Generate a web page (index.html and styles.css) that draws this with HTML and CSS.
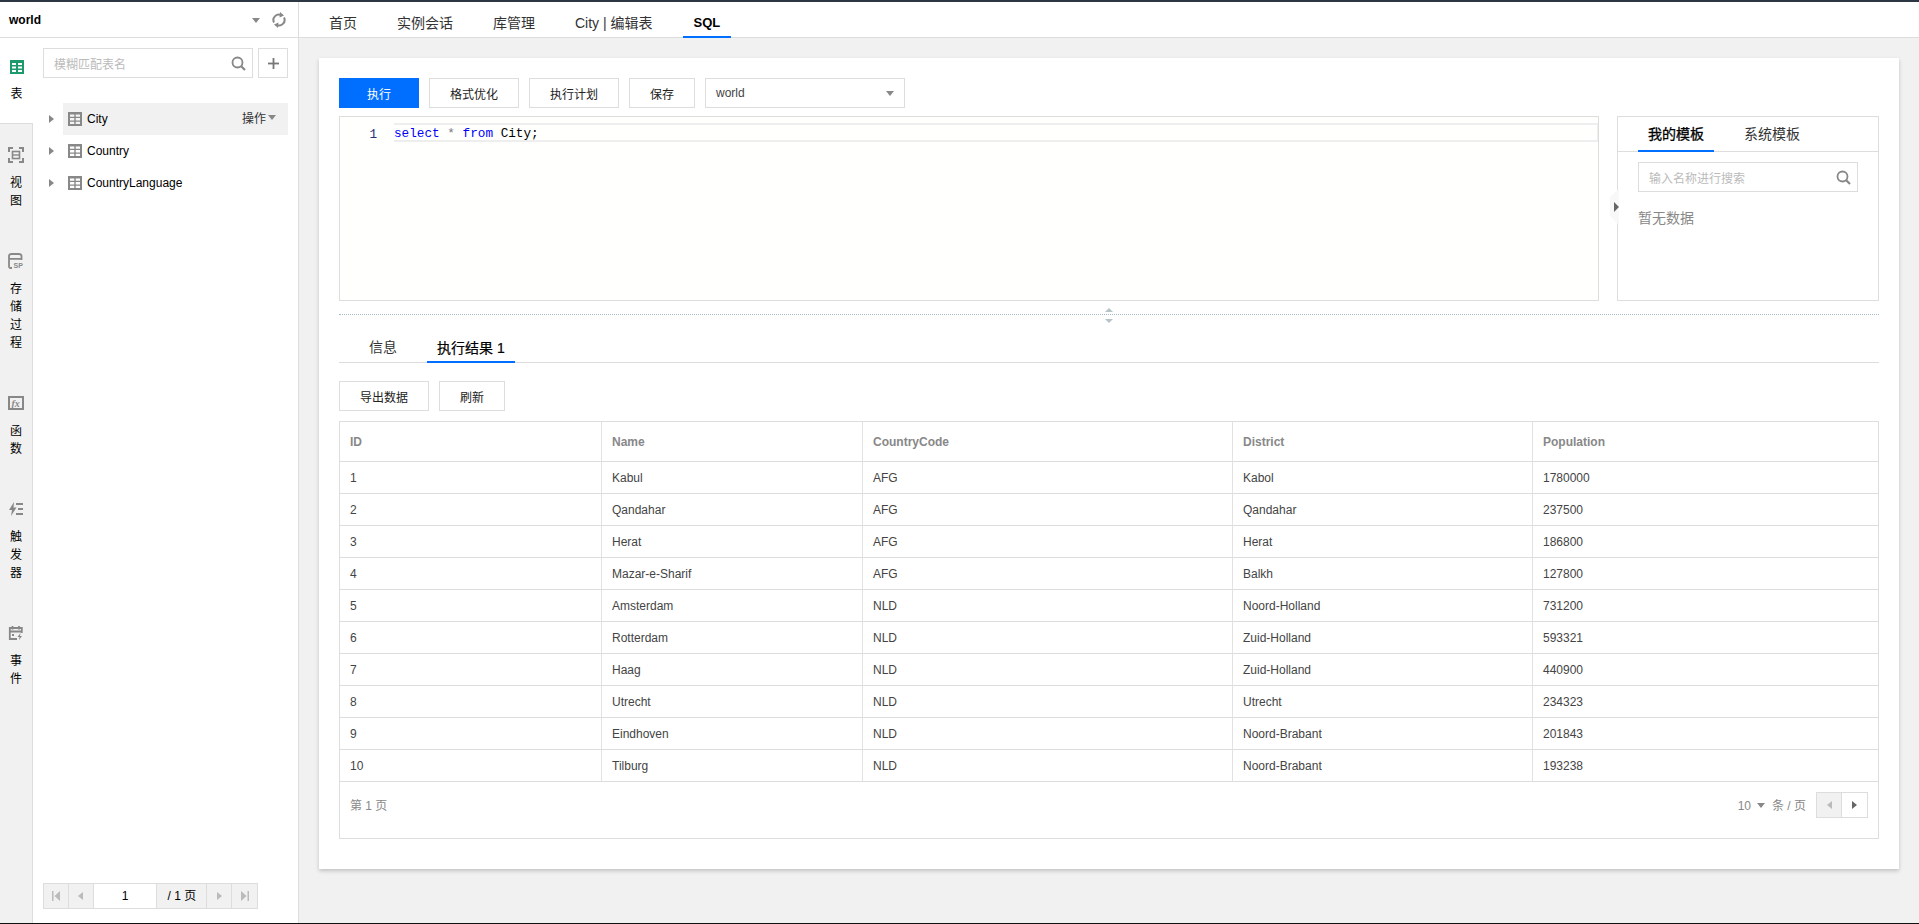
FILE: index.html
```html
<!DOCTYPE html>
<html lang="en">
<head>
    <meta charset="UTF-8">
    <meta name="viewport" content="width=device-width, initial-scale=1.0">
    <title>SQL</title>
    <link rel="stylesheet" href="styles.css">
</head>
<body>
<div class="app">
    <!-- left side: database name, object rail, table list -->
    <aside class="sidebar">
        <div class="db-head">
            <span class="db-name">world</span>
            <i class="tri tri-down db-caret"></i>
            <svg class="db-refresh" width="14" height="16" viewBox="0 0 14 16" fill="none" stroke="#888" stroke-width="2">
                <path d="M2 10.5A5.5 5.5 0 0 1 9.5 3.2"/>
                <path d="M12 5.5A5.5 5.5 0 0 1 4.5 12.8"/>
                <path d="M8 0l4 3.4-4.4 2z" fill="#888" stroke="none"/>
                <path d="M6 16l-4-3.4 4.4-2z" fill="#888" stroke="none"/>
            </svg>
        </div>
        <div class="side-body">
            <nav class="rail">
                <div class="rail-item active">
                    <svg width="14" height="14" viewBox="0 0 14 14"><rect width="14" height="14" fill="#1d9a6c"/><path d="M2 3h4v2H2zM8 3h4v2H8zM2 6.500h4v2H2zM8 6.500h4v2H8zM2 10h4v2H2zM8 10h4v2H8z" fill="#fff"/></svg>
                    <span class="rail-label">表</span>
                </div>
                <div class="rail-item">
                    <svg width="16" height="16" viewBox="0 0 16 16" fill="none" stroke="#888" stroke-width="2"><path d="M1 5V1h4M11 1h4v4M15 11v4h-4M5 15H1v-4"/><rect x="4.500" y="4.500" width="7" height="7" stroke-width="1.600"/><path d="M5 8h6" stroke-width="1.400"/></svg>
                    <span class="rail-label">视图</span>
                </div>
                <div class="rail-item">
                    <svg class="sp-icon" width="16" height="16" viewBox="0 0 16 16" fill="none" stroke="#888" stroke-width="1.800"><path d="M4 15H2.500Q1 15 1 13V3Q1 1 3.500 1h7Q13.500 1 13.500 3V7M1 5.800h12.500"/><text x="5.500" y="15" class="icon-text">SP</text></svg>
                    <span class="rail-label">存储过程</span>
                </div>
                <div class="rail-item">
                    <svg width="16" height="16" viewBox="0 0 16 16"><rect x="1" y="2" width="14" height="12" fill="none" stroke="#888" stroke-width="2"/><text x="3.500" y="11.500" class="icon-fx">fx</text></svg>
                    <span class="rail-label">函数</span>
                </div>
                <div class="rail-item">
                    <svg width="16" height="16" viewBox="0 0 16 16" fill="#888"><path d="M6 1L1 9h3l-1 6 5.500-8.500H5.500z"/><path d="M8 2h7v2H8zM10 7h5v2h-5zM8 12h7v2H8z"/></svg>
                    <span class="rail-label">触发器</span>
                </div>
                <div class="rail-item">
                    <svg width="16" height="16" viewBox="0 0 16 16" fill="none" stroke="#888" stroke-width="1.800"><path d="M9 14H1.800V3h12v5M1.800 6.500h12M4.500 1v3.500M11 1v3.500M4 10h2"/><path d="M12.500 8l-3 4h2l-.5 3 3-4h-2z" fill="#888" stroke="none"/></svg>
                    <span class="rail-label">事件</span>
                </div>
            </nav>
            <div class="table-pane">
                <div class="pane-search">
                    <div class="search-box">
                        <span class="placeholder">模糊匹配表名</span>
                        <svg class="search-icon" width="15" height="15" viewBox="0 0 15 15" fill="none" stroke="#888" stroke-width="1.800"><circle cx="6.500" cy="6.500" r="5"/><path d="M10.200 10.200L14 14" stroke-width="2.200"/></svg>
                    </div>
                    <div class="add-btn">
                        <svg width="11" height="11" viewBox="0 0 11 11" fill="#777"><path d="M4.600 0h1.800v11H4.600z"/><path d="M0 4.600h11v1.800H0z"/></svg>
                    </div>
                </div>
                <ul class="tree">
                    <li class="tree-row">
                        <i class="tri tri-right"></i>
                        <div class="tree-item current">
                            <svg class="tbl-icon" width="14" height="14" viewBox="0 0 14 14"><path d="M0 0h14v14H0z" fill="#888"/><path d="M2 2.500h4.300v2.300H2zM7.700 2.500H12v2.300H7.700zM2 6.100h4.300v2.300H2zM7.700 6.100H12v2.300H7.700zM2 9.700h4.300V12H2zM7.700 9.700H12V12H7.700z" fill="#f3f3f3"/></svg>
                            <span>City</span>
                            <span class="tree-op">操作<i class="tri tri-down"></i></span>
                        </div>
                    </li>
                    <li class="tree-row">
                        <i class="tri tri-right"></i>
                        <div class="tree-item">
                            <svg class="tbl-icon" width="14" height="14" viewBox="0 0 14 14"><path d="M0 0h14v14H0z" fill="#888"/><path d="M2 2.500h4.300v2.300H2zM7.700 2.500H12v2.300H7.700zM2 6.100h4.300v2.300H2zM7.700 6.100H12v2.300H7.700zM2 9.700h4.300V12H2zM7.700 9.700H12V12H7.700z" fill="#fff"/></svg>
                            <span>Country</span>
                        </div>
                    </li>
                    <li class="tree-row">
                        <i class="tri tri-right"></i>
                        <div class="tree-item">
                            <svg class="tbl-icon" width="14" height="14" viewBox="0 0 14 14"><path d="M0 0h14v14H0z" fill="#888"/><path d="M2 2.500h4.300v2.300H2zM7.700 2.500H12v2.300H7.700zM2 6.100h4.300v2.300H2zM7.700 6.100H12v2.300H7.700zM2 9.700h4.300V12H2zM7.700 9.700H12V12H7.700z" fill="#fff"/></svg>
                            <span>CountryLanguage</span>
                        </div>
                    </li>
                </ul>
                <div class="side-pager">
                    <span class="pg-btn"><svg width="8" height="10" viewBox="0 0 8 10" fill="#bbb"><path d="M0 0h1.500v10H0zM8 0v10L2.500 5z"/></svg></span>
                    <span class="pg-btn"><i class="tri tri-left off"></i></span>
                    <span class="pg-input">1</span>
                    <span class="pg-total">/ 1 页</span>
                    <span class="pg-btn"><i class="tri tri-right off"></i></span>
                    <span class="pg-btn"><svg width="8" height="10" viewBox="0 0 8 10" fill="#bbb"><path d="M6.500 0H8v10H6.500zM0 0v10l5.500-5z"/></svg></span>
                </div>
            </div>
        </div>
    </aside>

    <main class="main">
        <div class="top-tabs">
            <a class="top-tab">首页</a>
            <a class="top-tab">实例会话</a>
            <a class="top-tab">库管理</a>
            <a class="top-tab">City | 编辑表</a>
            <a class="top-tab on">SQL</a>
        </div>
        <div class="content">
            <div class="card">
                <div class="toolbar">
                    <button class="btn primary w-run">执行</button>
                    <button class="btn w-fmt">格式优化</button>
                    <button class="btn w-plan">执行计划</button>
                    <button class="btn w-save">保存</button>
                    <div class="db-select">world<i class="tri tri-down"></i></div>
                </div>
                <div class="editor-row">
                    <div class="editor">
                        <div class="gutter">1</div>
                        <div class="code-line"><span class="kw">select</span> <span class="star">*</span> <span class="kw">from</span> City;</div>
                    </div>
                    <div class="templates">
                        <div class="notch"><i class="tri tri-right dark"></i></div>
                        <div class="tpl-tabs">
                            <span class="tpl-tab on">我的模板</span>
                            <span class="tpl-tab">系统模板</span>
                        </div>
                        <div class="search-box tpl-search">
                            <span class="placeholder">输入名称进行搜索</span>
                            <svg class="search-icon" width="15" height="15" viewBox="0 0 15 15" fill="none" stroke="#888" stroke-width="1.800"><circle cx="6.500" cy="6.500" r="5"/><path d="M10.200 10.200L14 14" stroke-width="2.200"/></svg>
                        </div>
                        <div class="tpl-empty">暂无数据</div>
                    </div>
                </div>
                <div class="splitter">
                    <svg class="split-handle" width="8" height="15" viewBox="0 0 8 15" fill="#b4c4c8"><path d="M4 0l4 4H0zM0 11h8l-4 4z"/></svg>
                </div>
                <div class="result-tabs">
                    <span class="result-tab">信息</span>
                    <span class="result-tab on">执行结果 1</span>
                </div>
                <div class="result-actions">
                    <button class="btn w-export">导出数据</button>
                    <button class="btn w-refresh">刷新</button>
                </div>
                <div class="result">
                    <table class="grid">
                        <colgroup><col class="c1"><col class="c2"><col class="c3"><col class="c4"><col></colgroup>
                        <thead>
                            <tr><th>ID</th><th>Name</th><th>CountryCode</th><th>District</th><th>Population</th></tr>
                        </thead>
                        <tbody>
                            <tr><td>1</td><td>Kabul</td><td>AFG</td><td>Kabol</td><td>1780000</td></tr>
                            <tr><td>2</td><td>Qandahar</td><td>AFG</td><td>Qandahar</td><td>237500</td></tr>
                            <tr><td>3</td><td>Herat</td><td>AFG</td><td>Herat</td><td>186800</td></tr>
                            <tr><td>4</td><td>Mazar-e-Sharif</td><td>AFG</td><td>Balkh</td><td>127800</td></tr>
                            <tr><td>5</td><td>Amsterdam</td><td>NLD</td><td>Noord-Holland</td><td>731200</td></tr>
                            <tr><td>6</td><td>Rotterdam</td><td>NLD</td><td>Zuid-Holland</td><td>593321</td></tr>
                            <tr><td>7</td><td>Haag</td><td>NLD</td><td>Zuid-Holland</td><td>440900</td></tr>
                            <tr><td>8</td><td>Utrecht</td><td>NLD</td><td>Utrecht</td><td>234323</td></tr>
                            <tr><td>9</td><td>Eindhoven</td><td>NLD</td><td>Noord-Brabant</td><td>201843</td></tr>
                            <tr><td>10</td><td>Tilburg</td><td>NLD</td><td>Noord-Brabant</td><td>193238</td></tr>
                        </tbody>
                    </table>
                    <div class="grid-foot">
                        <span class="page-no">第 1 页</span>
                        <div class="foot-right">
                            <span class="page-size">10<i class="tri tri-down"></i></span>
                            <span class="page-unit">条 / 页</span>
                            <span class="foot-btns">
                                <span class="pg-btn off-bg"><i class="tri tri-left off"></i></span>
                                <span class="pg-btn"><i class="tri tri-right dark"></i></span>
                            </span>
                        </div>
                    </div>
                </div>
            </div>
        </div>
    </main>
</div>
</body>
</html>
```

FILE: styles.css
```css
* {
    box-sizing: border-box;
}
html, body {
    height: 100%;
    margin: 0;
    overflow: hidden;
}
body {
    background: #f1f1f1;
    border-top: 2px solid #2d3643;
    border-bottom: 1px solid #111;
    font-family: "Liberation Sans", "Noto Sans CJK SC", sans-serif;
    font-size: 12px;
    color: #000;
}
ul {
    list-style: none;
    margin: 0;
    padding: 0;
}
.app {
    display: flex;
    height: 100%;
}

/* small triangles */
.tri {
    display: inline-block;
    width: 0;
    height: 0;
    border-style: solid;
    border-color: transparent;
}
.tri-down {
    border-width: 5px 4px 0;
    border-top-color: #888;
}
.tri-right {
    border-width: 4.5px 0 4.5px 5px;
    border-left-color: #888;
}
.tri-left {
    border-width: 4.5px 5px 4.5px 0;
    border-right-color: #888;
}
.tri-right.off {
    border-left-color: #bbb;
}
.tri-left.off {
    border-right-color: #bbb;
}
.tri-right.dark {
    border-left-color: #666;
}

/* sidebar */
.sidebar {
    width: 299px;
    flex-shrink: 0;
    display: flex;
    flex-direction: column;
    background: #fff;
    border-right: 1px solid #ddd;
}
.db-head {
    height: 36px;
    display: flex;
    align-items: center;
    padding: 1px 12px 0 9px;
    border-bottom: 1px solid #ddd;
}
.db-name {
    font-size: 12px;
    font-weight: bold;
    flex: 1;
}
.db-caret {
    margin-right: 12px;
}
.side-body {
    flex: 1;
    display: flex;
}
.rail {
    width: 33px;
    flex-shrink: 0;
    background: #f1f1f1;
    border-right: 1px solid #ddd;
}
.rail-item {
    display: flex;
    flex-direction: column;
    align-items: center;
    padding: 23px 0 20px;
}
.rail-item svg {
    display: block;
}
.rail-item .sp-icon {
    overflow: visible;
}
.rail-item.active {
    background: #fff;
    margin-right: -1px;
    height: 86px;
    padding-top: 22px;
    border-bottom: 1px solid #ddd;
}
.rail-label {
    width: 12px;
    margin-top: 11px;
    line-height: 18px;
    text-align: center;
}
.icon-text {
    font-size: 7px;
    font-weight: bold;
    fill: #888;
    stroke: none;
}
.icon-fx {
    font-family: "Liberation Serif", serif;
    font-size: 10px;
    font-style: italic;
    font-weight: bold;
    fill: #888;
}
.table-pane {
    flex: 1;
    display: flex;
    flex-direction: column;
    padding: 10px 10px 14px;
}
.pane-search {
    display: flex;
    gap: 5px;
}
.search-box {
    position: relative;
    flex: 1;
    height: 30px;
    display: flex;
    align-items: center;
    padding-left: 10px;
    border: 1px solid #ddd;
    background: #fff;
}
.placeholder {
    color: #bbb;
}
.search-icon {
    position: absolute;
    right: 6px;
    top: 7px;
}
.add-btn {
    width: 30px;
    height: 30px;
    display: flex;
    align-items: center;
    justify-content: center;
    border: 1px solid #ddd;
}
.tree {
    flex: 1;
    margin-top: 25px;
}
.tree-row {
    display: flex;
    align-items: center;
    height: 32px;
    padding-left: 6px;
}
.tree-item {
    flex: 1;
    height: 32px;
    margin-left: 9px;
    padding: 0 12px 0 5px;
    display: flex;
    align-items: center;
    color: #000;
}
.tree-item.current {
    background: #f1f1f1;
}
.tbl-icon {
    margin-right: 5px;
}
.tree-op {
    margin-left: auto;
    margin-top: -3px;
    display: flex;
    align-items: center;
    gap: 2px;
    color: #333;
}
.side-pager {
    display: flex;
    width: 215px;
    height: 26px;
    border: 1px solid #ddd;
    background: #f1f1f1;
}
.pg-btn {
    width: 25px;
    display: flex;
    align-items: center;
    justify-content: center;
    border-right: 1px solid #ddd;
}
.side-pager .pg-btn:last-child {
    border-right: 0;
}
.pg-input {
    width: 64px;
    background: #fff;
    border-right: 1px solid #ddd;
    text-align: center;
    line-height: 24px;
}
.pg-total {
    width: 50px;
    border-right: 1px solid #ddd;
    text-align: center;
    line-height: 24px;
}

/* main area */
.main {
    flex: 1;
    display: flex;
    flex-direction: column;
    min-width: 0;
}
.top-tabs {
    height: 36px;
    display: flex;
    gap: 16px;
    padding-left: 18px;
    background: #fff;
    border-bottom: 1px solid #ddd;
}
.top-tab {
    height: 36px;
    padding: 11px 12px 0;
    line-height: 20px;
    font-size: 14px;
    color: #333;
}
.top-tab.on {
    margin-left: 2px;
    padding: 11px 11px 0;
    font-size: 13px;
    font-weight: bold;
    color: #000;
    border-bottom: 2px solid #006eff;
}
.content {
    flex: 1;
    padding: 20px 20px 0;
}
.card {
    height: 811px;
    padding: 20px;
    background: #fff;
    box-shadow: 0 2px 4px rgba(0, 0, 0, 0.2);
}
.toolbar {
    display: flex;
    gap: 10px;
}
.btn {
    height: 30px;
    padding: 0;
    border: 1px solid #ddd;
    background: #fff;
    font: inherit;
    color: #222;
}
.btn.primary {
    background: #006eff;
    border-color: #006eff;
    color: #fff;
}
.w-run { width: 80px; }
.w-fmt { width: 90px; }
.w-plan { width: 90px; }
.w-save { width: 66px; }
.w-export { width: 90px; }
.w-refresh { width: 66px; }
.db-select {
    width: 200px;
    height: 30px;
    padding: 0 10px;
    display: flex;
    align-items: center;
    justify-content: space-between;
    border: 1px solid #ddd;
    color: #444;
}
.editor-row {
    display: flex;
    gap: 18px;
    height: 185px;
    margin-top: 8px;
}
.editor {
    flex: 1;
    display: flex;
    align-items: flex-start;
    padding-top: 6px;
    border: 1px solid #ddd;
    background: #fffffe;
    font-family: "Liberation Mono", monospace;
    font-size: 12.7px;
}
.gutter {
    width: 54px;
    padding-right: 17px;
    text-align: right;
    line-height: 23px;
    color: #237;
}
.code-line {
    flex: 1;
    height: 19px;
    line-height: 18px;
    border: 2px solid #eee;
    border-right-width: 1px;
    border-left: 0;
}
.kw {
    color: #00f;
}
.star {
    color: #778;
}
.templates {
    position: relative;
    width: 262px;
    border: 1px solid #ddd;
    background: #fff;
}
.notch {
    position: absolute;
    left: -8px;
    top: 71px;
    width: 9px;
    height: 37px;
    display: flex;
    align-items: center;
    justify-content: flex-end;
    background: #f8f8f8;
    clip-path: polygon(100% 0, 0 25%, 0 75%, 100% 100%);
}
.notch .tri {
    border-width: 5px 0 5px 5px;
}
.tpl-tabs {
    display: flex;
    gap: 20px;
    height: 35px;
    padding-left: 20px;
    border-bottom: 1px solid #ddd;
}
.tpl-tab {
    width: 56px;
    line-height: 34px;
    font-size: 14px;
    white-space: nowrap;
    color: #333;
}
.tpl-tab.on {
    width: 76px;
    height: 35px;
    padding-left: 10px;
    color: #000;
    border-bottom: 2px solid #006eff;
    -webkit-text-stroke: 0.3px #000;
}
.tpl-tab:last-child {
    margin-left: 10px;
}
.tpl-search {
    flex: none;
    width: 220px;
    margin: 10px 0 0 20px;
}
.tpl-empty {
    margin: 16px 0 0 20px;
    font-size: 14px;
    line-height: 20px;
    color: #888;
}
.splitter {
    position: relative;
    height: 1px;
    margin-top: 13px;
    border-top: 1px dotted #a9bcc6;
}
.split-handle {
    position: absolute;
    left: 766px;
    top: -7px;
}
.result-tabs {
    display: flex;
    height: 48px;
    padding-left: 10px;
    border-bottom: 1px solid #ddd;
    align-items: flex-end;
}
.result-tab {
    height: 29px;
    padding: 0 20px;
    font-size: 14px;
    line-height: 28px;
    color: #333;
}
.result-tab.on {
    margin-left: 10px;
    padding: 0 10px;
    color: #000;
    border-bottom: 2px solid #006eff;
    margin-bottom: -1px;
    -webkit-text-stroke: 0.2px #000;
}
.result-actions {
    display: flex;
    gap: 10px;
    margin-top: 18px;
}
.result {
    margin-top: 10px;
    border: 1px solid #ddd;
}
.grid {
    width: 100%;
    table-layout: fixed;
    border-collapse: separate;
    border-spacing: 0;
}
.c1 { width: 262px; }
.c2 { width: 261px; }
.c3 { width: 370px; }
.c4 { width: 300px; }
.grid th,
.grid td {
    padding: 0 10px;
    text-align: left;
    border-right: 1px solid #e2e2e2;
    border-bottom: 1px solid #ddd;
}
.grid th:last-child,
.grid td:last-child {
    border-right: 0;
}
.grid th {
    height: 40px;
    color: #888;
}
.grid td {
    height: 32px;
    color: #444;
}
.grid-foot {
    height: 56px;
    padding: 10px 10px 0;
    display: flex;
    justify-content: space-between;
    color: #888;
}
.page-no {
    line-height: 28px;
}
.foot-right {
    display: flex;
    align-items: flex-start;
    line-height: 28px;
}
.page-size {
    display: flex;
    align-items: center;
    gap: 6px;
    margin-right: 7px;
    height: 26px;
    padding-top: 1px;
}
.page-unit {
    margin-right: 10px;
    word-spacing: 0;
}
.foot-btns {
    display: flex;
    height: 26px;
    border: 1px solid #ddd;
}
.foot-btns .pg-btn {
    width: 25px;
}
.foot-btns .pg-btn:last-child {
    border-right: 0;
}
.off-bg {
    background: #f1f1f1;
}
```
